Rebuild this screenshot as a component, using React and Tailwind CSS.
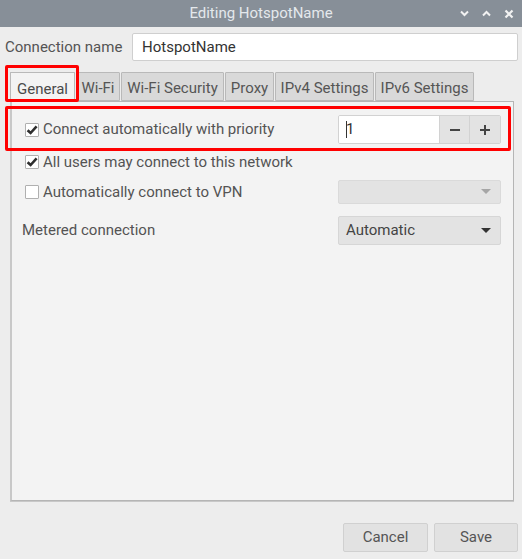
import React from "react";

function Check({ checked }) {
  return (
    <div className="w-[14px] h-[14px] border border-[#b0b0b0] bg-white rounded-[1px] flex items-center justify-center shrink-0">
      {checked && (
        <svg width="12" height="12" viewBox="0 0 12 12">
          <path d="M1.6 6.2 L4.6 9 L10.6 2.4" fill="none" stroke="#2e2e2e" strokeWidth="2.6" />
        </svg>
      )}
    </div>
  );
}

function Arrow({ color }) {
  return (
    <svg width="10" height="6" viewBox="0 0 10 6">
      <path d="M0 0 L10 0 L5 5 Z" fill={color} />
    </svg>
  );
}

const tabs = [
  { label: "General", w: "w-[65px]", active: true },
  { label: "Wi-Fi", w: "w-[44px]" },
  { label: "Wi-Fi Security", w: "w-[103px]" },
  { label: "Proxy", w: "w-[49px]" },
  { label: "IPv4 Settings", w: "w-[99px]" },
  { label: "IPv6 Settings", w: "w-[99px]" },
];

export default function App() {
  return (
    <div
      className="relative w-[522px] h-[559px] bg-[#ededed] flex flex-col text-[15px] text-[#545454] overflow-hidden"
      style={{ fontFamily: "Roboto, 'Liberation Sans', sans-serif" }}
    >
      {/* Title bar */}
      <div className="relative h-[27px] bg-[#878f98] flex items-center justify-center shrink-0">
        <span className="text-[#e4e8ec] text-[15px]">Editing HotspotName</span>
        <div className="absolute right-[8px] top-0 h-full flex items-center gap-[13px]">
          <svg width="9" height="7" viewBox="0 0 9 7">
            <path d="M1 1.5 L4.5 5 L8 1.5" fill="none" stroke="#f2f2f2" strokeWidth="2" />
          </svg>
          <svg width="9" height="7" viewBox="0 0 9 7">
            <path d="M1 5.5 L4.5 2 L8 5.5" fill="none" stroke="#f2f2f2" strokeWidth="2" />
          </svg>
          <svg width="10" height="10" viewBox="0 0 10 10">
            <path d="M1.5 1.5 L8.5 8.5 M8.5 1.5 L1.5 8.5" fill="none" stroke="#f2f2f2" strokeWidth="2.2" />
          </svg>
        </div>
      </div>

      {/* Connection name row */}
      <div className="flex items-center pl-[5px] pr-[4px] mt-[6px] h-[28px]">
        <span>Connection name</span>
        <div className="ml-auto w-[386px] h-[28px] bg-white border border-[#cfcfcf] rounded-[2px] flex items-center pl-[9px] text-[#333]">
          HotspotName
        </div>
      </div>

      {/* Tabs */}
      <div className="flex gap-[1px] ml-[10px] mt-[11px] h-[29px]">
        {tabs.map((t) => (
          <div
            key={t.label}
            className={
              t.w +
              " flex items-center justify-center pt-[4px] border border-[#b9b9b9] rounded-t-[1px] " +
              (t.active
                ? "bg-[#f3f3f3] border-b-0 text-[#4a4a4a] relative z-10 h-[30px]"
                : "bg-[#d9d9d9] text-[#555] h-[29px]")
            }
          >
            {t.label}
          </div>
        ))}
      </div>

      {/* Panel */}
      <div className="ml-[10px] w-[504px] h-[400px] bg-[#f3f3f3] border border-[#b5b5b5] border-l-2 border-l-[#c8c8c8] shadow-[0_1px_0_#c8c8c8] flex flex-col">
        {/* Row 1 */}
        <div className="flex items-center mt-[13px] h-[29px] pl-[13px] pr-[12px]">
          <Check checked />
          <span className="ml-[4px]">Connect automatically with priority</span>
          <div className="ml-auto w-[163px] h-[29px] flex border border-[#d2d2d2] rounded-[2px] overflow-hidden">
            <div className="flex-1 bg-white flex items-center pl-[7px] text-[#333]">
              <div className="w-[1px] h-[17px] bg-[#333]" />
              <span className="-ml-[1px]">1</span>
            </div>
            <div className="w-[30px] bg-[#e3e3e3] border-l border-[#d2d2d2] flex items-center justify-center">
              <div className="w-[10px] h-[2px] bg-[#444]" />
            </div>
            <div className="w-[31px] bg-[#e3e3e3] border-l border-[#d2d2d2] flex items-center justify-center">
              <svg width="10" height="10" viewBox="0 0 10 10">
                <path d="M0 5 H10 M5 0 V10" stroke="#444" strokeWidth="2" />
              </svg>
            </div>
          </div>
        </div>

        {/* Row 2 */}
        <div className="flex items-center mt-[8px] h-[20px] pl-[13px]">
          <Check checked />
          <span className="ml-[4px]">All users may connect to this network</span>
        </div>

        {/* Row 3 */}
        <div className="flex items-center mt-[8px] h-[24px] pl-[13px] pr-[12px]">
          <Check />
          <span className="ml-[4px]">Automatically connect to VPN</span>
          <div className="ml-auto w-[163px] h-[24px] bg-[#e3e3e3] border border-[#dadada] rounded-[2px] flex items-center justify-end pr-[9px]">
            <Arrow color="#a6a6a6" />
          </div>
        </div>

        {/* Row 4 */}
        <div className="flex items-center mt-[12px] h-[29px] pl-[10px] pr-[12px]">
          <span>Metered connection</span>
          <div className="ml-auto w-[163px] h-[29px] bg-[#e3e3e3] border border-[#d6d6d6] rounded-[2px] flex items-center pl-[7px] pr-[9px] text-[#444]">
            <span>Automatic</span>
            <div className="ml-auto">
              <Arrow color="#333" />
            </div>
          </div>
        </div>
      </div>

      {/* Buttons */}
      <div className="flex justify-end gap-[6px] mt-[22px] pr-[4px]">
        <div className="w-[85px] h-[29px] bg-[#e2e2e2] border border-[#d0d0d0] rounded-[2px] flex items-center justify-center text-[#555]">
          Cancel
        </div>
        <div className="w-[84px] h-[29px] bg-[#e2e2e2] border border-[#d0d0d0] rounded-[2px] flex items-center justify-center text-[#555]">
          Save
        </div>
      </div>

      {/* Red annotation boxes */}
      <div className="absolute left-[5px] top-[65px] w-[74px] h-[37px] border-[3px] border-[#ff0000] rounded-[2px] pointer-events-none z-20" />
      <div className="absolute left-[5px] top-[106px] w-[506px] h-[45px] border-[3px] border-[#ff0000] rounded-[2px] pointer-events-none z-20" />
    </div>
  );
}
